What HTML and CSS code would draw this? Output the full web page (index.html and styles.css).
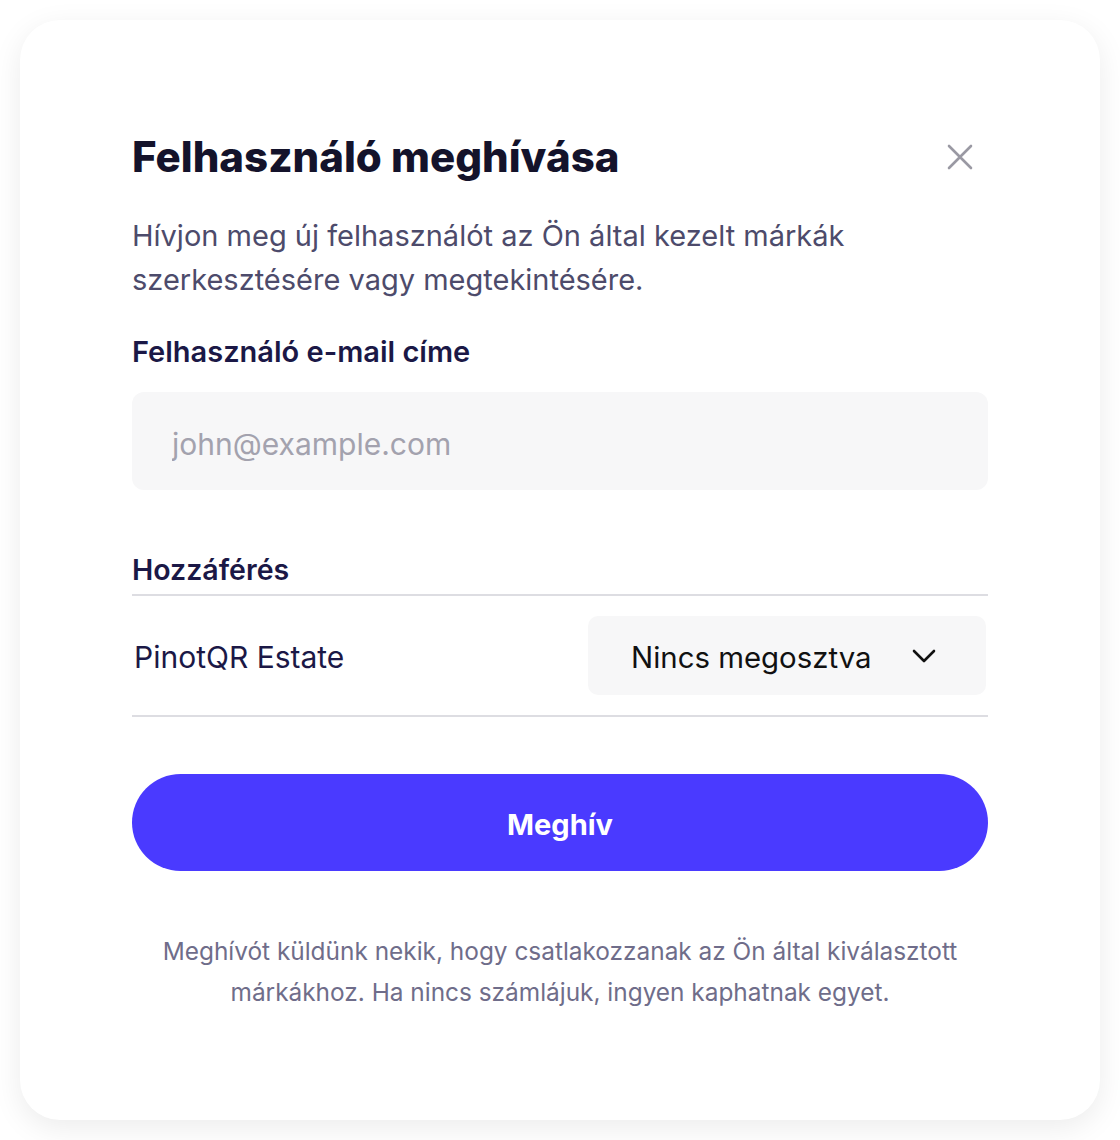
FILE: index.html
```html
<!DOCTYPE html>
<html lang="hu">
<head>
<meta charset="utf-8">
<title>Felhasználó meghívása</title>
<link rel="stylesheet" href="styles.css">
</head>
<body>
<div class="card">
  <div class="head">
    <h1 class="title">Felhasználó meghívása</h1>
    <button class="close" aria-label="Bezárás">
      <svg width="28" height="28" viewBox="0 0 28 28"><path d="M3 3L25 25M25 3L3 25" stroke="#9a99a3" stroke-width="2.6" stroke-linecap="round" fill="none"/></svg>
    </button>
  </div>
  <p class="desc">Hívjon meg új felhasználót az Ön által kezelt márkák szerkesztésére vagy megtekintésére.</p>
  <label class="label" for="email">Felhasználó e-mail címe</label>
  <input class="input" id="email" type="email" placeholder="john@example.com">
  <div class="section">Hozzáférés</div>
  <div class="row">
    <span class="brand">PinotQR Estate</span>
    <div class="select">
      <span class="select-text">Nincs megosztva</span>
      <svg width="24" height="16" viewBox="0 0 24 16"><path d="M2 3L12 13L22 3" stroke="#111" stroke-width="2.6" stroke-linecap="round" stroke-linejoin="round" fill="none"/></svg>
    </div>
  </div>
  <button class="invite">Meghív</button>
  <p class="note">Meghívót küldünk nekik, hogy csatlakozzanak az Ön által kiválasztott márkákhoz. Ha nincs számlájuk, ingyen kaphatnak egyet.</p>
</div>
</body>
</html>
```
FILE: styles.css
```css
html, body {
  margin: 0;
  padding: 0;
  background: #ffffff;
}
body {
  font-family: "Inter", "Liberation Sans", sans-serif;
  padding: 20px;
}
.card {
  box-sizing: border-box;
  width: 1080px;
  height: 1100px;
  background: #fff;
  border-radius: 40px;
  box-shadow: 0 8px 30px rgba(0, 0, 0, 0.08);
  padding: 109px 112px 0 112px;
  display: flex;
  flex-direction: column;
}
.head {
  display: flex;
  align-items: center;
  justify-content: space-between;
}
.title {
  margin: 0;
  font-size: 42px;
  line-height: 56px;
  font-weight: 800;
  color: #14132b;
  letter-spacing: 0;
}
.close {
  background: none;
  border: 0;
  padding: 0;
  margin-right: 14px;
  width: 28px;
  height: 28px;
  display: flex;
}
.desc {
  margin: 29px 0 0 0;
  font-size: 29px;
  line-height: 44px;
  color: #4d4b6b;
  max-width: 760px;
}
.label {
  margin-top: 30px;
  font-size: 29px;
  line-height: 40px;
  font-weight: 600;
  color: #1b1846;
}
.input {
  margin-top: 20px;
  box-sizing: border-box;
  width: 856px;
  height: 98px;
  border: 0;
  border-radius: 12px;
  background: #f7f7f8;
  padding: 5px 40px 0 40px;
  font: inherit;
  font-size: 30px;
  color: #14132b;
  outline: none;
}
.input::placeholder {
  color: #a3a2ae;
}
.section {
  margin-top: 60px;
  font-size: 28.5px;
  line-height: 40px;
  font-weight: 600;
  color: #1b1846;
  padding-bottom: 4px;
  border-bottom: 2px solid #dddde2;
}
.row {
  display: flex;
  align-items: center;
  justify-content: space-between;
  padding: 20px 0 20px 2px;
  border-bottom: 2px solid #dddde2;
}
.brand {
  font-size: 30px;
  color: #1b1846;
  padding-top: 3px;
}
.select {
  box-sizing: border-box;
  width: 398px;
  height: 79px;
  margin-right: 2px;
  background: #f7f7f8;
  border-radius: 10px;
  display: flex;
  align-items: center;
  justify-content: space-between;
  padding: 0 50px 0 43px;
  font-size: 29.4px;
  color: #111;
}
.select-text {
  padding-top: 4px;
}
.invite {
  margin-top: 57px;
  width: 856px;
  height: 97px;
  border: 0;
  border-radius: 50px;
  background: #4a3aff;
  color: #fff;
  font: inherit;
  font-size: 29px;
  font-weight: 700;
  padding-top: 5px;
}
.note {
  margin: 60px 0 0 0;
  text-align: center;
  font-size: 24.4px;
  line-height: 41px;
  color: #6f6d8a;
  padding: 0 20px;
}
```
